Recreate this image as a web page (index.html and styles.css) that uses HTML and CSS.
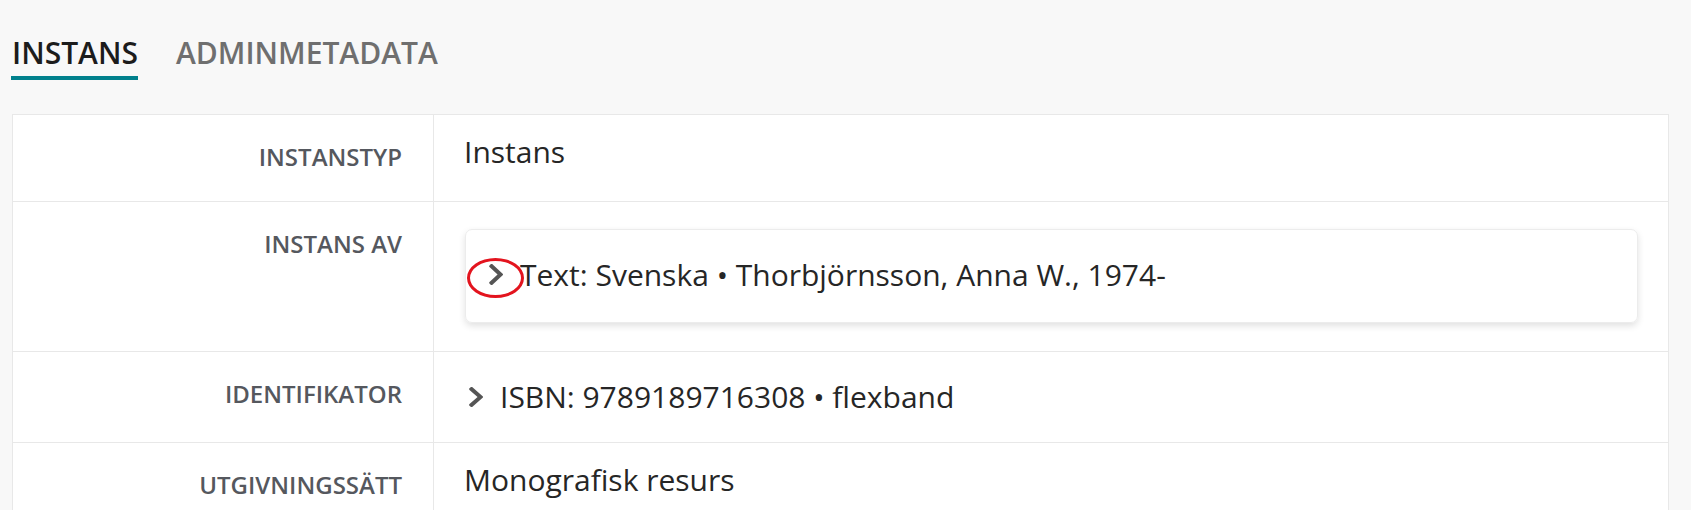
FILE: index.html
```html
<!DOCTYPE html>
<html lang="sv">
<head>
<meta charset="utf-8">
<title>Instans</title>
<link rel="stylesheet" href="styles.css">
</head>
<body>
<nav class="tabs">
  <span class="tab tab-active">INSTANS</span>
  <span class="tab">ADMINMETADATA</span>
</nav>
<section class="table">
  <div class="row">
    <div class="label">Instanstyp</div>
    <div class="value">Instans</div>
  </div>
  <div class="row">
    <div class="label">Instans av</div>
    <div class="value value-card">
      <div class="card">
        <svg class="chev" viewBox="25 38 267 436" preserveAspectRatio="none" aria-hidden="true"><path d="M285.476 272.971L91.132 467.314c-9.373 9.373-24.569 9.373-33.941 0l-22.667-22.667c-9.357-9.357-9.375-24.522-.04-33.901L188.505 256 34.484 101.255c-9.335-9.379-9.317-24.544.04-33.901l22.667-22.667c9.373-9.373 24.569-9.373 33.941 0L285.475 239.03c9.373 9.372 9.373 24.568.001 33.941z"/></svg>
        <span class="text">Text: Svenska • Thorbjörnsson, Anna W., 1974-</span>
        <span class="mark"></span>
      </div>
    </div>
  </div>
  <div class="row">
    <div class="label">Identifikator</div>
    <div class="value value-id">
      <svg class="chev chev-id" viewBox="25 38 267 436" preserveAspectRatio="none" aria-hidden="true"><path d="M285.476 272.971L91.132 467.314c-9.373 9.373-24.569 9.373-33.941 0l-22.667-22.667c-9.357-9.357-9.375-24.522-.04-33.901L188.505 256 34.484 101.255c-9.335-9.379-9.317-24.544.04-33.901l22.667-22.667c9.373-9.373 24.569-9.373 33.941 0L285.475 239.03c9.373 9.372 9.373 24.568.001 33.941z"/></svg>
      <span class="text">ISBN: 9789189716308 • flexband</span>
    </div>
  </div>
  <div class="row">
    <div class="label">Utgivningssätt</div>
    <div class="value">Monografisk resurs</div>
  </div>
</section>
</body>
</html>
```
FILE: styles.css
```css
* { box-sizing: border-box; }
html, body { margin: 0; }
body {
  background: #f8f8f8;
  padding: 35px 22px 0 12px;
  font-family: "Open Sans", "Noto Sans", sans-serif;
  overflow: hidden;
  height: 510px;
}
.tabs {
  display: flex;
  gap: 38px;
}
.tab {
  font-size: 30px;
  line-height: 36px;
  font-weight: 600;
  color: #6f6f6f;
  padding-bottom: 5px;
  border-bottom: 4px solid transparent;
}
.tab-active {
  color: #1c1c1c;
  border-bottom-color: #00808c;
  margin-left: -1px;
  padding-left: 1px;
}
.table {
  margin-top: 34px;
  background: #fff;
  border: 1px solid #e8e8e8;
  border-bottom: none;
}
.row {
  display: grid;
  grid-template-columns: 421px 1fr;
  border-top: 1px solid #e8e8e8;
}
.row:first-child { border-top: none; }
.label {
  border-right: 1px solid #e8e8e8;
  padding: 24px 31px 26px 0;
  text-align: right;
  text-transform: uppercase;
  font-size: 24px;
  line-height: 36px;
  font-weight: 600;
  color: #55585e;
}
.value {
  padding: 14px 30px 27px 30px;
  font-size: 30px;
  line-height: 45px;
  color: #262626;
}
.value-card {
  padding: 27px 30px 28px 31px;
}
.card {
  position: relative;
  display: flex;
  align-items: center;
  border: 1px solid #ececec;
  border-radius: 7px;
  box-shadow: 0 3px 7px rgba(0, 0, 0, 0.12);
  padding: 22px 24px 25px 23px;
}
.chev {
  width: 14px;
  height: 21px;
  fill: #555;
  flex: none;
  margin-right: 17px;
}
.value-id {
  display: flex;
  align-items: center;
  padding: 22px 30px 23px 30px;
}
.chev-id {
  width: 14px;
  height: 20px;
  margin-left: 5px;
  margin-right: 17px;
  margin-top: 1px;
}
.mark {
  position: absolute;
  left: 1px;
  top: 28px;
  width: 57px;
  height: 40px;
  border: 3.5px solid #e3141e;
  border-radius: 50%;
}
```
